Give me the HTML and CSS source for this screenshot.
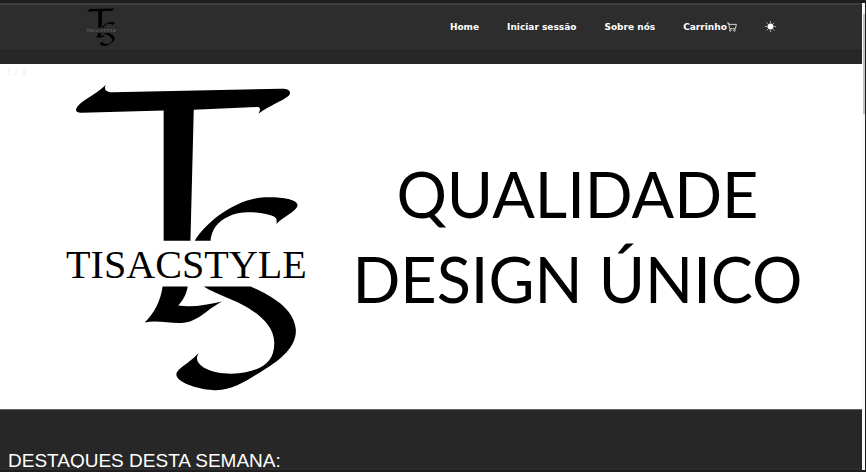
FILE: index.html
```
<!DOCTYPE html>
<html lang="pt">
<head>
    <meta charset="UTF-8">
    <meta name="viewport" content="width=device-width, initial-scale=1.0">
    <title>TisacStyle</title>
    <link rel="stylesheet" href="styles.css">
</head>
<body>

    <div class="page">
        <header class="navbar">
            <a href="#" class="brand" aria-label="TisacStyle">
                <svg class="brand-logo" viewBox="64 84 244 306">
                    <use href="#emblem"/>
                    <text class="brand-name" x="186" y="277">TISACSTYLE</text>
                </svg>
            </a>
            <nav class="menu">
                <a href="#">Home</a>
                <a href="#">Iniciar sessão</a>
                <a href="#">Sobre nós</a>
                <a href="#">Carrinho<svg class="cart" viewBox="0 0 16 16">
                    <path d="M0 1.5h2.5l.6 2.3H15l-1.6 7H4.3L2.6 2"/>
                    <circle cx="5.2" cy="13.5" r="1.3"/>
                    <circle cx="12" cy="13.5" r="1.3"/>
                </svg></a>
                <button type="button" class="theme" aria-label="Mudar tema">
                    <svg viewBox="0 0 16 16">
                        <circle cx="8" cy="8" r="4"/>
                        <path d="M8 0v2.4M8 13.6V16M0 8h2.4M13.6 8H16M2.3 2.3L4 4M12 12l1.7 1.7M2.3 13.7L4 12M12 4l1.7-1.7"/>
                    </svg>
                </button>
            </nav>
        </header>

        <!-- Slideshow -->
        <section class="slide">
            <span class="slide-number">1 / 3</span>
            <svg class="slide-logo" viewBox="64 84 244 306" role="img" aria-label="TisacStyle">
                <defs>
                    <g id="emblem">
                        <path d="M105.7 85C103 90 107 92.3 113 92.3L280 88.7C287 88.5 290 90.5 289 94C287 99 271 104 257.7 113.7C260 109 260 107 256 107L193.3 109.7L190 240.3H163.3V110.3L82 112.7C77 113 75 111.500 76.500 108C80 101 94 96 105.700 85Z"/>
                        <path d="M194.300 240.300C205 222 233 200 261 197C277 196 298 198 296.700 205.500C295 211 283 216 275.500 223.500C277 218 275 216 269 214.500C255 211 239 210 228 216C217 221 211 229 210 240.300Z"/>
                        <path d="M162.300 285.700H187.300C186 293 183 299 177.700 304.700C191 307 207 304 221.700 300.700C208 307 199 320 183.300 322C170 323 157 319 144.300 321.700C154 312 160 301 162.300 285.700Z"/>
                        <path d="M203.300 285.700H250C268 294 293 306 295 328.500C296 345 281 358 263 369C250 377 231 391 212 389C196 388 175 381 176 373C177 367 188 363 198.300 351.700C194 359 198 363 204 367C215 373 232 374 246 371C265 367 274 358 273.500 341C273 326 260 315 248 307.500C233 298 216 294 203.300 285.700Z"/>
                    </g>
                </defs>
                <use href="#emblem"/>
                <text class="brand-name" x="186" y="277">TISACSTYLE</text>
            </svg>
            <p class="slogan">QUALIDADE<br>DESIGN ÚNICO</p>
        </section>

        <main class="highlights">
            <h1>DESTAQUES DESTA SEMANA:</h1>
        </main>
    </div>

    <div class="scroll-track">
        <div class="scroll-thumb"></div>
    </div>

</body>
</html>
```
FILE: styles.css
```
* {
    box-sizing: border-box;
}

body {
    font-family: "DejaVu Sans", Verdana, sans-serif;
    background: #1f1d1d;
    color: white;
    display: flex;
    height: 100vh;
    margin: 0;
    padding: 3px 1px 2px 0;
    overflow: hidden;
}

.page {
    flex: 1;
    background: #272727;
    border-top: 2px solid #404040;
    border-bottom: 2px solid #2c2c2e;
    overflow: hidden;
}

/* Top bar */
.navbar {
    display: flex;
    justify-content: space-between;
    align-items: center;
    height: 46px;
    padding: 0 10% 2px;
    background: #2d2d2d;
    border-bottom: 1px solid #222;
}

.brand {
    display: flex;
}

.brand-logo {
    height: 38px;
}

.brand-name {
    font-family: "Liberation Serif", serif;
    font-size: 40px;
    text-anchor: middle;
}

.navbar .brand-name {
    fill: #777;
}

.menu {
    display: flex;
    align-items: center;
    gap: 28px;
}

.menu a {
    display: flex;
    align-items: center;
    color: white;
    font-size: 9px;
    font-weight: bold;
    text-decoration: none;
}

.cart {
    width: 10px;
    height: 10px;
    fill: none;
    stroke: #ddd;
    stroke-width: 1.5;
}

.theme {
    display: flex;
    padding: 0;
    border: none;
    background: none;
    cursor: pointer;
}

.theme svg {
    width: 11px;
    height: 11px;
    fill: white;
    stroke: white;
}

/* Slideshow */
.slide {
    position: relative;
    display: flex;
    align-items: center;
    margin-top: 13px;
    padding: 20px 56px 18px 64px;
    background: white;
    border-bottom: 1px solid #666;
    color: black;
}

.slide-number {
    position: absolute;
    top: 4px;
    left: 6px;
    color: #f2f2f2;
    font-size: 9px;
}

.slide-logo {
    width: 33%;
}

.slogan {
    flex: 1;
    margin: 0;
    padding: 0 0 4px 40px;
    font-family: Lato, sans-serif;
    font-size: 63px;
    font-weight: normal;
    line-height: 85px;
    text-align: center;
    white-space: nowrap;
}

/* Weekly highlights */
.highlights {
    padding: 40px 8px;
}

.highlights h1 {
    margin: 0;
    font-family: "Liberation Sans", Arial, sans-serif;
    font-size: 19px;
    font-weight: normal;
    line-height: 22px;
}

/* Scrollbar */
.scroll-track {
    width: 3px;
    padding-top: 11px;
    background: #f8f8f8;
}

.scroll-thumb {
    height: 100px;
    margin-left: 1px;
    background: #c1c1c1;
}
```
